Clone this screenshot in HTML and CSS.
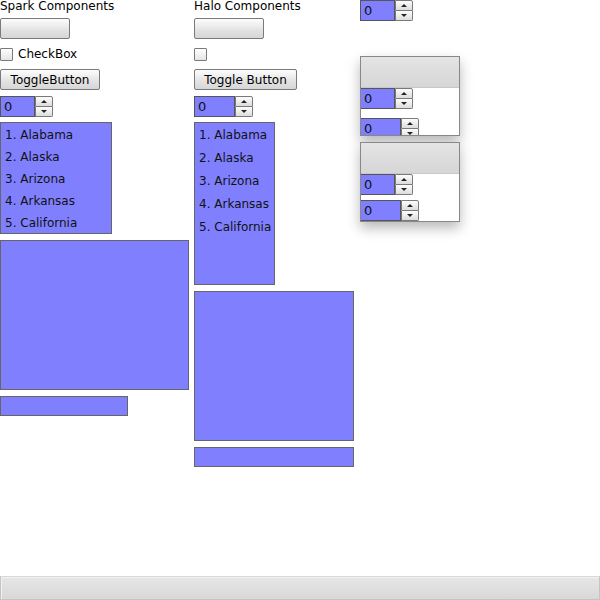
FILE: index.html
```html
<!DOCTYPE html>
<html>
<head>
<meta charset="utf-8">
<link rel="stylesheet" href="styles.css">
</head>
<body>
<div class="main">
  <div class="col col-spark">
    <div class="title">Spark Components</div>
    <div class="btn btn-plain"></div>
    <div class="check-row"><span class="check"></span><span class="check-label">CheckBox</span></div>
    <div class="btn btn-toggle">ToggleButton</div>
    <div class="stepper st-spark"><div class="st-field">0</div><div class="st-btns"><div class="st-up"><span class="tri-up"></span></div><div class="st-down"><span class="tri-down"></span></div></div></div>
    <ul class="list list-spark">
      <li>1. Alabama</li>
      <li>2. Alaska</li>
      <li>3. Arizona</li>
      <li>4. Arkansas</li>
      <li>5. California</li>
    </ul>
    <div class="box box-spark"></div>
    <div class="bar bar-spark"></div>
  </div>
  <div class="col col-halo">
    <div class="title">Halo Components</div>
    <div class="btn btn-plain"></div>
    <div class="check-row"><span class="check"></span></div>
    <div class="btn btn-toggle-halo">Toggle Button</div>
    <div class="stepper st-halo"><div class="st-field">0</div><div class="st-btns"><div class="st-up"><span class="tri-up"></span></div><div class="st-down"><span class="tri-down"></span></div></div></div>
    <ul class="list list-halo">
      <li>1. Alabama</li>
      <li>2. Alaska</li>
      <li>3. Arizona</li>
      <li>4. Arkansas</li>
      <li>5. California</li>
    </ul>
    <div class="box box-halo"></div>
    <div class="bar bar-halo"></div>
  </div>
  <div class="col col-right">
    <div class="stepper st-spark"><div class="st-field">0</div><div class="st-btns"><div class="st-up"><span class="tri-up"></span></div><div class="st-down"><span class="tri-down"></span></div></div></div>
    <div class="panel panel-one">
      <div class="panel-head"></div>
      <div class="panel-body body-one">
        <div class="stepper st-spark"><div class="st-field">0</div><div class="st-btns"><div class="st-up"><span class="tri-up"></span></div><div class="st-down"><span class="tri-down"></span></div></div></div>
        <div class="stepper st-halo"><div class="st-field">0</div><div class="st-btns"><div class="st-up"><span class="tri-up"></span></div><div class="st-down"><span class="tri-down"></span></div></div></div>
      </div>
    </div>
    <div class="panel panel-two">
      <div class="panel-head"></div>
      <div class="panel-body body-two">
        <div class="stepper st-spark"><div class="st-field">0</div><div class="st-btns"><div class="st-up"><span class="tri-up"></span></div><div class="st-down"><span class="tri-down"></span></div></div></div>
        <div class="stepper st-halo"><div class="st-field">0</div><div class="st-btns"><div class="st-up"><span class="tri-up"></span></div><div class="st-down"><span class="tri-down"></span></div></div></div>
      </div>
    </div>
  </div>
</div>
<div class="footer"></div>
</body>
</html>
```
FILE: styles.css
```css
* { box-sizing: border-box; }
html, body { margin: 0; padding: 0; }
body {
  width: 600px;
  height: 600px;
  display: flex;
  flex-direction: column;
  font-family: "DejaVu Sans", Verdana, sans-serif;
  font-size: 12px;
  color: #000;
  background: #fff;
  overflow: hidden;
}
.main {
  display: flex;
  gap: 6px;
  align-items: flex-start;
}
.col {
  display: flex;
  flex-direction: column;
  align-items: flex-start;
}
.col-spark { width: 188px; }
.col-halo { width: 160px; }
.col-right { width: 100px; }
.title {
  height: 18px;
  line-height: 12px;
  white-space: nowrap;
}
.btn {
  height: 21px;
  border: 1px solid #7a7a7a;
  border-radius: 2px;
  background: linear-gradient(#fdfdfd, #e2e2e2 60%, #d6d6d6);
  display: flex;
  align-items: center;
  justify-content: center;
  white-space: nowrap;
}
.btn-plain { width: 70px; }
.btn-toggle { width: 100px; margin-top: 8px; }
.btn-toggle-halo { width: 103px; margin-top: 8px; }
.check-row {
  margin-top: 8px;
  height: 14px;
  display: flex;
  align-items: center;
}
.check {
  width: 13px;
  height: 13px;
  border: 1px solid #7a7a7a;
  border-radius: 1px;
  background: linear-gradient(#fff, #e4e4e4);
}
.check-label { margin-left: 5px; }
.stepper {
  display: flex;
  height: 21px;
}
.col-spark > .stepper, .col-halo > .stepper { margin-top: 6px; }
.st-spark { width: 53px; }
.st-halo { width: 59px; }
.st-field {
  flex: 1;
  background: #8080ff;
  border: 1px solid #555;
  padding-left: 3px;
  line-height: 19px;
  font-size: 13px;
  color: #111;
}
.st-btns {
  width: 18px;
  display: flex;
  flex-direction: column;
}
.st-up, .st-down {
  flex: 1;
  border: 1px solid #7a7a7a;
  background: linear-gradient(#fdfdfd, #dcdcdc);
  display: flex;
  align-items: center;
  justify-content: center;
}
.st-up { border-radius: 0 2px 0 0; }
.st-down { border-top: none; border-radius: 0 0 2px 0; }
.tri-up {
  width: 0; height: 0;
  border-left: 3px solid transparent;
  border-right: 3px solid transparent;
  border-bottom: 3px solid #222;
}
.tri-down {
  width: 0; height: 0;
  border-left: 3px solid transparent;
  border-right: 3px solid transparent;
  border-top: 3px solid #222;
}
.list {
  list-style: none;
  margin: 5px 0 0;
  padding: 1px 0 0;
  background: #8080ff;
  border: 1px solid #666;
  color: #111;
}
.list li { white-space: nowrap; }
.list-spark { width: 112px; height: 112px; }
.list-spark li { height: 22px; line-height: 22px; padding-left: 4px; }
.list-halo { width: 81px; height: 163px; }
.list-halo li { height: 23px; line-height: 23px; padding-left: 4px; }
.box, .bar {
  background: #8080ff;
  border: 1px solid #666;
  margin-top: 6px;
}
.box-spark { width: 189px; height: 150px; }
.bar-spark { width: 128px; height: 20px; }
.box-halo { width: 160px; height: 150px; }
.bar-halo { width: 160px; height: 20px; }
.panel {
  width: 100px;
  height: 80px;
  border: 1px solid #888;
  background: #fff;
  box-shadow: 0 6px 12px rgba(0,0,0,0.28);
  display: flex;
  flex-direction: column;
  overflow: hidden;
}
.panel-one { margin-top: 35px; }
.panel-two { margin-top: 6px; }
.panel-head {
  height: 31px;
  flex: none;
  background: linear-gradient(#e4e4e4, #d6d6d6);
  border-bottom: 1px solid #c8c8c8;
}
.panel-body {
  flex: 1;
  display: flex;
  flex-direction: column;
  align-items: flex-start;
}
.panel-body .stepper { margin-left: -1px; }
.body-one { gap: 9px; }
.body-two { gap: 5px; }
.footer {
  margin-top: auto;
  height: 24px;
  width: 600px;
  border: 1px solid #c4c4c4;
  border-top-color: #d8d8d8;
  background: linear-gradient(#e6e6e6, #d8d8d8);
  box-shadow: inset 1px 1px 0 #f2f2f2;
}
```
